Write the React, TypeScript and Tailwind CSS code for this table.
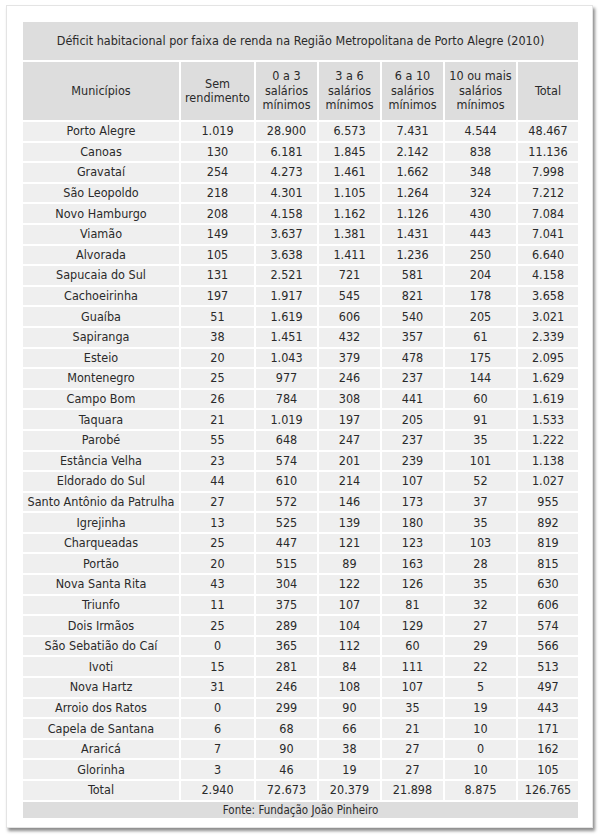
const rows: [string, string, string, string, string, string, string][] = [
  ['Porto Alegre', '1.019', '28.900', '6.573', '7.431', '4.544', '48.467'],
  ['Canoas', '130', '6.181', '1.845', '2.142', '838', '11.136'],
  ['Gravataí', '254', '4.273', '1.461', '1.662', '348', '7.998'],
  ['São Leopoldo', '218', '4.301', '1.105', '1.264', '324', '7.212'],
  ['Novo Hamburgo', '208', '4.158', '1.162', '1.126', '430', '7.084'],
  ['Viamão', '149', '3.637', '1.381', '1.431', '443', '7.041'],
  ['Alvorada', '105', '3.638', '1.411', '1.236', '250', '6.640'],
  ['Sapucaia do Sul', '131', '2.521', '721', '581', '204', '4.158'],
  ['Cachoeirinha', '197', '1.917', '545', '821', '178', '3.658'],
  ['Guaíba', '51', '1.619', '606', '540', '205', '3.021'],
  ['Sapiranga', '38', '1.451', '432', '357', '61', '2.339'],
  ['Esteio', '20', '1.043', '379', '478', '175', '2.095'],
  ['Montenegro', '25', '977', '246', '237', '144', '1.629'],
  ['Campo Bom', '26', '784', '308', '441', '60', '1.619'],
  ['Taquara', '21', '1.019', '197', '205', '91', '1.533'],
  ['Parobé', '55', '648', '247', '237', '35', '1.222'],
  ['Estância Velha', '23', '574', '201', '239', '101', '1.138'],
  ['Eldorado do Sul', '44', '610', '214', '107', '52', '1.027'],
  ['Santo Antônio da Patrulha', '27', '572', '146', '173', '37', '955'],
  ['Igrejinha', '13', '525', '139', '180', '35', '892'],
  ['Charqueadas', '25', '447', '121', '123', '103', '819'],
  ['Portão', '20', '515', '89', '163', '28', '815'],
  ['Nova Santa Rita', '43', '304', '122', '126', '35', '630'],
  ['Triunfo', '11', '375', '107', '81', '32', '606'],
  ['Dois Irmãos', '25', '289', '104', '129', '27', '574'],
  ['São Sebatião do Caí', '0', '365', '112', '60', '29', '566'],
  ['Ivoti', '15', '281', '84', '111', '22', '513'],
  ['Nova Hartz', '31', '246', '108', '107', '5', '497'],
  ['Arroio dos Ratos', '0', '299', '90', '35', '19', '443'],
  ['Capela de Santana', '6', '68', '66', '21', '10', '171'],
  ['Araricá', '7', '90', '38', '27', '0', '162'],
  ['Glorinha', '3', '46', '19', '27', '10', '105'],
  ['Total', '2.940', '72.673', '20.379', '21.898', '8.875', '126.765'],
];

const colWidths = ['w-[158px]', 'w-[75px]', 'w-[63px]', 'w-[63px]', 'w-[63px]', 'w-[73px]', 'w-[62px]'];

const headers: string[][] = [
  ['Municípios'],
  ['Sem', 'rendimento'],
  ['0 a 3', 'salários', 'mínimos'],
  ['3 a 6', 'salários', 'mínimos'],
  ['6 a 10', 'salários', 'mínimos'],
  ['10 ou mais', 'salários', 'mínimos'],
  ['Total'],
];

export default function App() {
  return (
    <div className="min-h-[838px] w-[600px] bg-white pt-[5px] pl-[6px] font-['DejaVu_Sans_Condensed','DejaVu_Sans',sans-serif] text-[#2a2a2a]">
      <div className="w-[587px] h-[823px] border border-[#e4e4e4] bg-white pt-[14px] pl-[14px] shadow-[2px_3px_3px_rgba(0,0,0,0.45)]">
        <table className="w-[557px] table-fixed border-collapse text-[12.5px]">
          <colgroup>
            {colWidths.map((w, i) => (
              <col key={i} className={w} />
            ))}
          </colgroup>
          <thead>
            <tr>
              <th colSpan={7} className="h-[40px] border-2 border-white bg-[#dddddd] text-center font-normal">
                Déficit habitacional por faixa de renda na Região Metropolitana de Porto Alegre (2010)
              </th>
            </tr>
            <tr>
              {headers.map((h, i) => (
                <th key={i} className="h-[60px] border-2 border-white bg-[#dddddd] px-0 text-center font-normal leading-[14.5px]">
                  {h.map((line, j) => (
                    <div key={j}>{line}</div>
                  ))}
                </th>
              ))}
            </tr>
          </thead>
          <tbody>
            {rows.map((r, i) => (
              <tr key={i} className="h-[20.6px]">
                {r.map((c, j) => (
                  <td key={j} className="border-2 border-white bg-[#efefef] p-0 text-center leading-[16px] whitespace-nowrap">
                    {c}
                  </td>
                ))}
              </tr>
            ))}
            <tr>
              <td colSpan={7} className="h-[18px] border-2 border-white bg-[#dddddd] p-0 text-center text-[11.5px] leading-[14px]">
                Fonte: Fundação João Pinheiro
              </td>
            </tr>
          </tbody>
        </table>
      </div>
    </div>
  );
}
